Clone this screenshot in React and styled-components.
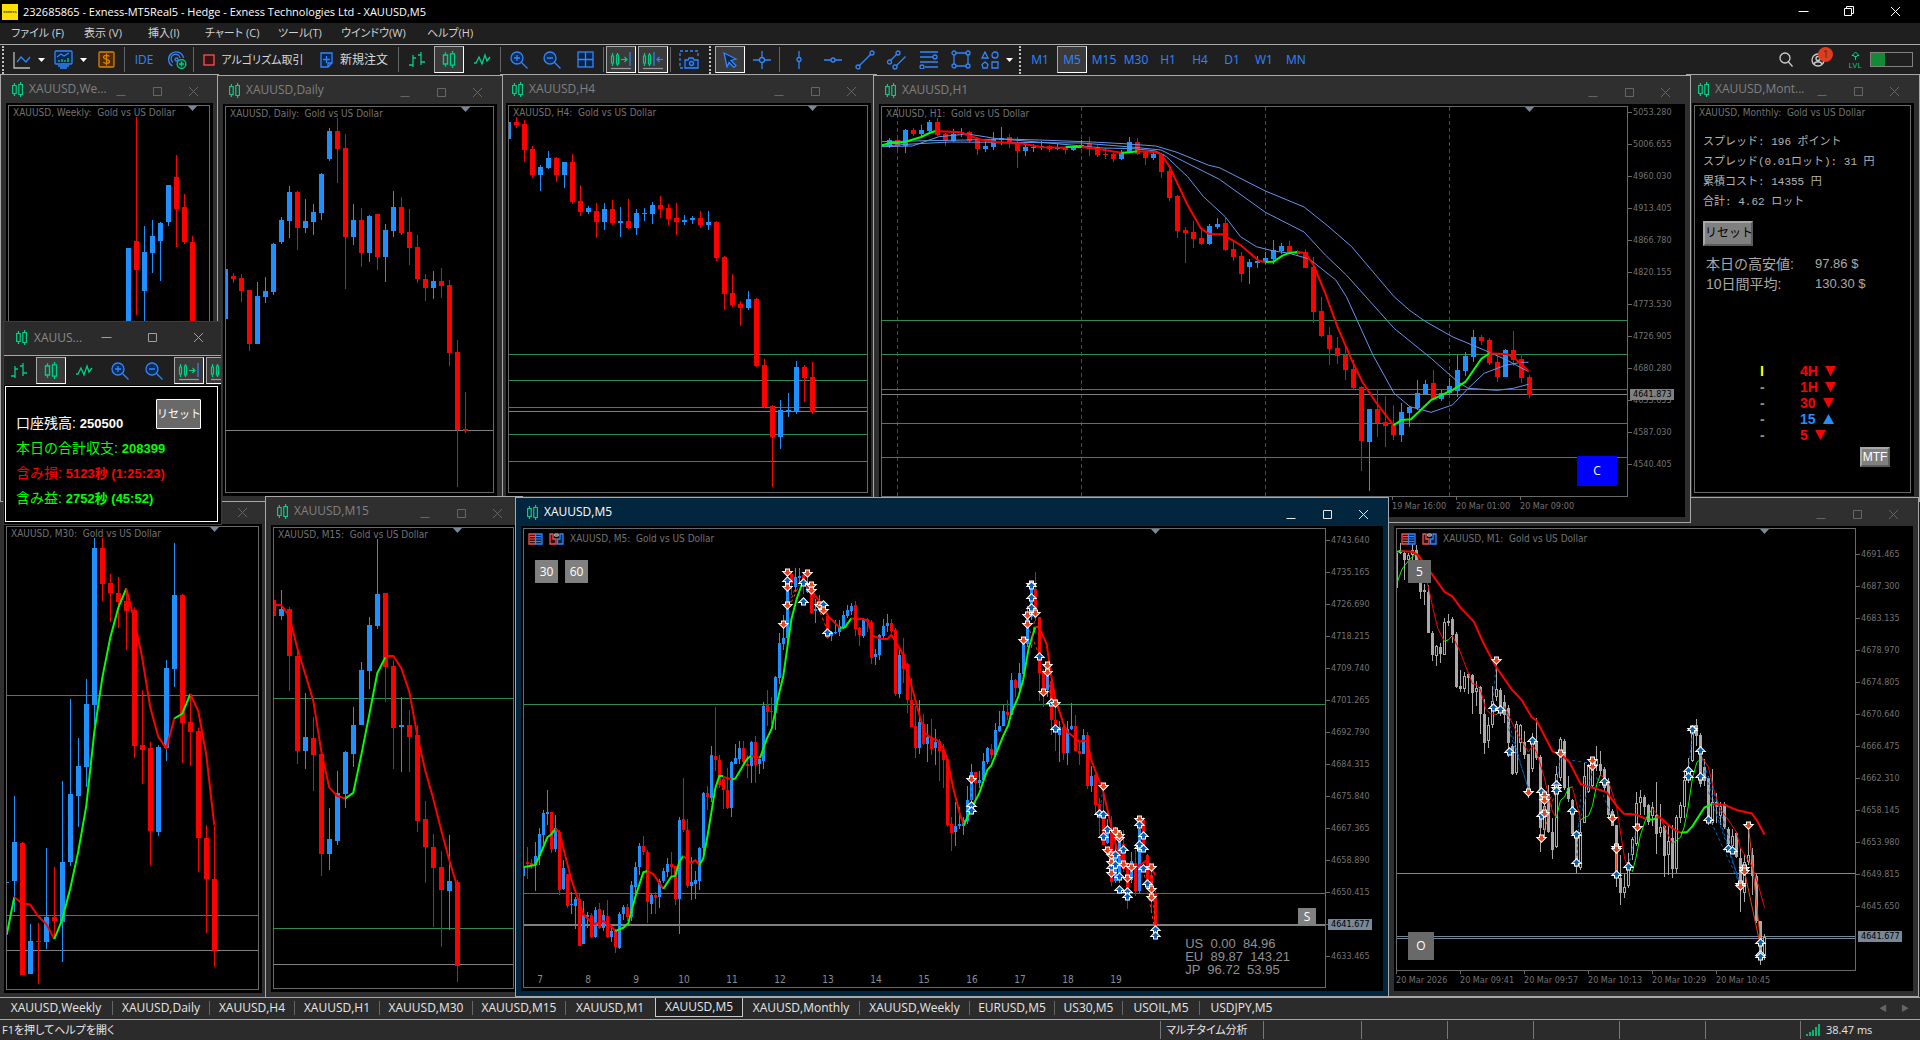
import React from 'react';
import styled, { createGlobalStyle, css } from 'styled-components';

const GlobalStyle = createGlobalStyle`
  * { box-sizing: border-box; }
  html, body { margin: 0; background: #000; }
  body { overflow: hidden; }
  button { font: inherit; color: inherit; padding: 0; margin: 0; background: none; border: 0; }
`;

const ui = '"Open Sans", "Noto Sans CJK JP", sans-serif';
const small = '"DejaVu Sans Condensed", "Open Sans", "Noto Sans CJK JP", sans-serif';
const arial = '"Liberation Sans", "Noto Sans CJK JP", sans-serif';
const gothic = '"Liberation Mono", "Noto Sans CJK JP", monospace';

const colors = {
  up: '#1e90ff',
  down: '#ff0000',
  lime: '#00ff00',
  level: '#2e8b57',
  price: '#808080',
  slate: '#778899',
  blue: '#6495ed',
  silver: '#a9a9a9'
};

/* ---------- chart data ----------
   bars: direction, high, body top, body bottom, low
   lines: "x,y x,y ..." in the same units, see origin and unit of each chart */

const weekly = {
  origin: [27, 18], unit: [3, 3], firstX: 119, step: 8,
  bars: `u 444 444 700 700,d 51 423 510 645,u 378 456 573 690,u 360 408 459 519,u 366 369 423 543,
    u 255 255 366 378,d 165 231 327 441,d 282 321 426 432,d 408 426 1000 1100`
};

const daily = {
  origin: [678, 21], unit: [3, 3], firstX: -1, step: 8,
  prices: [[991, colors.price]],
  bars: `u 507 507 657 657,d 519 528 537 549,d 522 534 573 606,d 570 570 732 753,u 546 588 732 732,
    u 531 573 591 609,u 429 432 576 585,u 351 360 426 432,u 258 276 363 414,d 273 276 384 450,
    u 297 363 384 399,u 312 336 366 405,u 219 222 339 360,u 84 93 177 183,d 54 93 147 249,
    d 102 144 411 567,u 312 360 411 435,d 324 360 459 501,u 345 348 459 486,d 342 342 471 510,
    u 372 390 471 546,u 273 321 393 411,d 291 321 399 405,d 327 396 444 495,d 405 441 537 549,
    d 522 537 564 603,u 513 543 564 597,d 504 543 558 594,d 540 555 759 798,d 720 756 991 1161,
    d 876 987 993 999`
};

const h4 = {
  origin: [27, 108], unit: [3, 3], firstX: -1, step: 8,
  prices: [853, 931, 1012, 1093, 1174].map(y => [y, colors.level]).concat([[1024, colors.price]]),
  bars: `u 156 156 207 207,d 141 156 165 174,d 150 162 240 276,d 228 237 315 324,u 285 291 315 363,
    u 243 264 294 297,d 261 264 315 336,u 276 276 315 354,d 252 276 396 402,d 345 393 426 438,
    u 408 414 426 432,d 399 423 456 504,u 399 417 456 480,d 390 417 459 465,u 411 453 459 501,
    d 387 453 474 477,u 417 429 474 495,u 414 429 432 453,u 396 405 432 462,d 378 405 417 444,
    d 402 414 447 465,d 399 444 456 495,u 435 450 456 465,u 438 444 450 462,d 423 444 465 474,
    u 423 456 465 480,d 453 456 564 573,d 558 561 672 720,d 612 669 705 711,d 693 702 714 768,
    u 663 687 714 720,d 684 687 888 891,d 867 885 1012 1014,d 1005 1008 1101 1251,
    u 990 1020 1101 1137,u 969 1020 1024 1041,u 873 891 1024 1032,d 885 891 924 996,d 876 921 1026 1032`
};

const h1 = {
  origin: [22.7, 111], unit: [1.889, 3], firstX: -1, step: 8,
  prices: [751, 853, 958, 1060, 1162].map(y => [y, colors.level]).concat([[973, colors.price]]),
  days: [15, 199, 383, 567],
  bars: `u 222 222 232 234,u 204 210 232 234,d 206 210 228 238,u 178 180 228 249,d 174 180 192 198,
    u 165 180 192 201,u 150 156 183 189,d 144 156 195 198,d 189 192 213 228,u 177 192 213 216,
    u 174 186 189 200,d 183 186 213 219,d 200 204 237 255,u 213 228 237 246,u 186 207 231 240,
    u 171 203 210 225,d 192 201 219 234,d 201 219 243 294,u 225 231 243 258,u 222 231 234 246,
    u 213 228 231 240,d 225 228 236 246,u 222 231 236 240,d 228 231 240 252,u 228 231 240 243,
    u 210 225 231 234,d 201 222 237 258,d 222 234 255 261,d 234 252 255 267,d 246 252 267 276,
    u 240 246 267 270,u 201 216 246 249,d 204 216 252 255,d 243 246 264 285,u 249 252 264 270,
    d 249 252 306 324,d 297 303 384 393,d 375 378 483 504,d 471 480 489 579,d 453 486 507 534,
    d 477 504 522 525,u 462 468 522 525,u 444 462 471 477,d 444 459 540 543,d 510 537 561 573,
    d 546 558 612 636,u 567 576 591 642,u 558 573 579 594,u 546 564 573 582,u 510 540 567 582,
    u 519 528 543 552,d 513 528 546 552,d 540 543 552 558,d 537 546 594 594,d 561 591 726 759,
    d 681 723 798 801,d 771 795 837 885,d 801 834 858 882,d 822 855 900 930,d 870 897 954 957,
    d 948 951 1113 1203,u 1017 1017 1116 1263,d 957 1017 1060 1101,d 978 1056 1068 1131,
    d 1005 1065 1095 1110,u 999 1026 1095 1116,u 1008 1011 1029 1071,u 930 969 1014 1020,
    u 930 942 972 975,d 900 939 987 990,u 960 969 987 993,u 924 948 969 975,u 855 900 963 981,
    u 846 858 903 918,u 780 801 861 876,d 795 801 813 825,d 804 810 879 885,d 858 876 921 936,
    u 837 840 921 921,d 783 840 870 888,d 852 867 924 939,d 915 921 975 984`,
  lines: [
    [colors.blue, 1, '22,215 80,213 180,210 250,207 320,210 420,216 480,221 540,228 580,247 640,286 660,293 747,363 820,411 865,468 910,530 950,605 990,680 1020,722 1050,755 1100,800 1160,840 1200,868 1244,905'],
    [colors.blue, 1, '22,228 80,222 150,216 250,217 400,219 500,232 550,240 590,272 660,328 747,427 820,486 860,555 900,615 990,775 1060,865 1110,935 1130,955 1185,961 1215,955 1244,943'],
    [colors.blue, 1, '22,230 80,228 130,200 185,192 240,206 310,215 380,225 440,234 500,236 540,243 560,260 600,320 630,380 671,440 700,500 730,530 762,543 790,549 830,567 880,630 900,680 920,750 950,855 990,970 1020,1010 1060,1027 1100,1005 1130,955 1160,910 1200,886 1230,877 1244,877'],
    [colors.lime, 2, '22,226 37,219 52,219 67,215 97,201 112,189 124,183'],
    [colors.down, 2, '124,183 170,187 190,198 210,209 240,217 290,221 325,232 370,233'],
    [colors.lime, 2, '370,231 400,231'],
    [colors.down, 2, '400,231 440,239 475,248'],
    [colors.lime, 2, '475,248 490,247 505,244'],
    [colors.down, 2, '505,244 537,246 550,252 566,290 600,405 625,475 641,492 665,493 700,525 735,573 747,576'],
    [colors.lime, 2, '747,576 762,575 780,556 792,549 807,546'],
    [colors.down, 2, '807,546 822,549 838,585 860,670 883,770 910,870 930,935 955,995 989,1066'],
    [colors.lime, 2, '989,1066 1004,1050 1022,1048 1060,990 1100,960 1125,935 1155,866 1170,850'],
    [colors.down, 2, '1170,850 1205,853 1220,868 1244,903']
  ]
};

const m30 = {
  origin: [21, 105], unit: [3, 2.851], firstX: -1, step: 8,
  prices: [[585, colors.level], [1210, colors.level], [1310, colors.price]],
  bars: `u 1116 1116 1118 1118,u 872 1004 1115 1203,d 1004 1006 1383 1383,u 1237 1286 1380 1380,
    d 1234 1286 1289 1408,u 1021 1217 1289 1309,d 1075 1217 1229 1275,u 830 1061 1232 1346,
    u 596 867 1061 1072,u 707 787 872 961,u 539 610 790 847,u 137 165 613 670,d 137 165 268 316,
    d 239 265 294 376,d 248 294 319 393,d 285 316 345 456,d 334 342 730 764,d 570 727 741 838,
    d 718 736 972 1069,u 727 733 975 986,u 485 507 736 773,u 151 299 510 562,d 296 299 664 778,
    d 585 661 690 787,d 678 687 992 1089,d 955 992 1109 1263,d 958 1109 1314 1360`,
  lines: [
    [colors.lime, 2, '20,1268 43,1160'],
    [colors.down, 2, '43,1160 65,1178 90,1181 115,1215 139,1237 163,1280'],
    [colors.lime, 2, '163,1280 187,1223 211,1135 235,1030 259,900 283,690 307,535 331,420 355,335 379,280'],
    [colors.down, 2, '379,280 403,370 427,480 451,620 475,703 499,736 523,651'],
    [colors.lime, 2, '523,651 547,637 571,581'],
    [colors.down, 2, '571,581 595,630 619,755 643,955']
  ]
};

const m15 = {
  origin: [822, 108], unit: [3, 2.851], firstX: -1, step: 8,
  prices: [[594, colors.level], [1247, colors.level], [1352, colors.price]],
  bars: `d 314 314 360 360,u 285 339 359 371,d 334 339 473 573,d 450 473 744 781,u 579 704 744 795,
    d 647 707 755 858,d 740 753 1038 1100,u 907 995 1038 1083,u 801 864 1001 1012,u 744 747 867 907,
    u 619 670 753 790,u 490 513 670 670,u 362 385 516 567,u 140 296 388 396,d 293 293 505 604,
    d 485 502 679 795,u 590 670 676 804,d 627 670 704 804,d 670 698 944 975,d 887 938 1018 1120,
    d 981 1018 1078 1246,d 1029 1075 1140 1303,u 984 1115 1143 1254,d 1112 1118 1357 1403`,
  lines: [
    [colors.down, 2, '822,327 844,328 868,360 892,450 916,525 940,600 964,745 988,848 1012,872 1036,879'],
    [colors.lime, 2, '1036,879 1060,863 1084,755 1108,640 1132,522 1156,477'],
    [colors.down, 2, '1156,473 1180,473 1204,508 1228,575 1252,700 1276,800 1300,880 1324,970 1348,1055 1368,1118']
  ]
};

const m5 = {
  origin: [27, 111], unit: [3, 2.851], firstX: -1, step: 4,
  prices: [[611, colors.level], [1150, colors.level], [1236, colors.price], [1239, colors.price]],
  bars: `u 1060 1075 1100 1100,d 1018 1060 1066 1109,d 1051 1063 1072 1080,u 1004 1043 1069 1143,
    u 964 981 1043 1069,u 912 921 984 1010,u 855 918 924 955,d 918 918 1023 1035,u 927 964 1023 1032,
    d 969 975 1140 1155,u 1055 1078 1138 1140,d 1095 1095 1186 1192,u 1146 1180 1183 1209,
    u 1160 1166 1186 1252,d 1152 1166 1300 1300,u 1172 1212 1294 1294,u 1203 1212 1217 1249,
    d 1206 1212 1274 1277,u 1189 1197 1274 1277,d 1177 1195 1249 1252,u 1197 1212 1249 1257,
    d 1169 1214 1274 1277,u 1246 1257 1274 1289,d 1252 1257 1303 1320,u 1203 1209 1306 1309,
    u 1183 1189 1209 1226,d 1180 1189 1217 1230,u 1115 1126 1217 1229,u 1061 1075 1132 1160,
    u 1006 1015 1075 1098,d 986 1015 1032 1041,d 1026 1032 1175 1235,u 1149 1155 1180 1209,
    d 1146 1155 1163 1209,u 1109 1115 1160 1192,u 1078 1086 1115 1120,u 1049 1066 1089 1103,
    d 1032 1066 1075 1103,d 1072 1072 1166 1183,u 932 941 1166 1266,d 821 938 969 975,
    d 938 969 1130 1135,u 1046 1118 1130 1169,u 1086 1112 1123 1166,u 1018 1021 1115 1140,
    u 861 864 1021 1041,d 844 864 875 912,u 730 755 878 889,d 619 758 770 801,d 755 770 841 850,
    d 821 824 855 909,d 793 855 907 909,u 773 776 907 932,u 724 764 781 781,u 716 736 767 781,
    d 716 736 776 787,d 755 781 787 821,u 716 718 787 835,d 701 718 784 835,u 758 767 781 810,
    u 605 616 773 795,d 570 613 633 673,d 590 630 633 667,u 530 533 636 684,u 408 436 536 553,
    u 356 422 439 456,u 262 280 422 436,d 230 240 265 300,u 222 248 275 291,u 222 245 250 262,
    d 240 242 270 296,u 250 265 290 294,d 270 288 350 353,u 310 339 345 379,u 300 325 336 348,
    d 325 330 345 352,d 355 359 422 425,u 402 405 416 430,u 371 404 408 411,u 371 388 405 416,
    u 345 356 391 396,u 328 342 359 365,u 322 331 345 356,d 316 328 396 416,d 390 393 413 445,
    u 365 368 416 422,d 365 368 376 404,d 371 376 479 495,u 453 467 476 499,u 410 413 470 485,
    u 368 388 416 425,u 354 379 388 404,d 368 379 402 408,d 393 399 582 587,u 456 470 582 593,
    d 422 467 510 550,d 493 496 599 636,d 536 599 676 676,d 616 673 735 764,u 599 661 736 753,
    d 639 667 724 727,u 667 704 724 775,d 653 704 738 755,u 681 718 736 784,d 710 716 744 830,
    d 724 741 770 850,d 764 767 955 961,d 932 952 978 1029,u 890 958 975 1015,u 904 952 958 966,
    u 932 941 958 984,u 844 884 944 952,u 781 804 884 912,d 804 804 835 895,u 801 827 835 850,
    u 750 773 827 830,u 733 736 775 781,d 724 738 755 767,u 664 684 755 761,u 630 673 687 690,
    u 613 630 673 673,d 599 633 641 656,u 522 542 641 641,d 539 542 564 590,u 493 522 564 570,
    u 420 433 525 525,u 331 362 439 447,u 262 280 362 370,d 234 282 350 373,d 362 362 522 602,
    d 510 516 570 619,u 500 530 570 590,d 530 545 656 699,d 590 656 684 744,u 659 676 698 775,
    d 667 676 750 770,u 659 681 750 784,u 607 673 682 685,d 641 673 744 744,d 721 744 753 784,
    u 681 698 753 753,d 690 698 844 852,u 787 815 844 861,d 810 813 898 924,d 878 895 915 984,
    d 870 915 1012 1012,u 938 969 1007 1010,d 929 975 1118 1129,u 960 1040 1115 1120,
    u 981 1003 1112 1120,d 969 1010 1080 1090,d 1060 1075 1150 1195,u 1032 1058 1112 1120,
    d 1026 1063 1143 1157,u 932 965 1143 1149,d 932 940 1020 1030,d 1038 1040 1130 1140,
    d 1080 1098 1160 1206,d 1143 1150 1240 1280`,
  lines: [
    [colors.lime, 2, '27,1075 61,1069 80,1029 97,990 109,981 121,966'],
    [colors.down, 2, '121,966 133,975 145,1020 169,1110 193,1177 205,1209 235,1238 265,1229 285,1240 301,1257'],
    [colors.lime, 2, '301,1257 325,1248 340,1235 361,1160 385,1090 397,1086'],
    [colors.down, 2, '397,1086 415,1095 445,1137'],
    [colors.lime, 2, '445,1137 469,1102 481,1100 493,1060 505,1043'],
    [colors.down, 2, '505,1043 529,1063 541,1055 553,1069'],
    [colors.lime, 2, '553,1069 565,1050 577,990 601,850 613,815 625,815'],
    [colors.down, 2, '625,818 650,825'],
    [colors.lime, 2, '650,825 661,823 697,765 709,758'],
    [colors.down, 2, '709,758 735,764'],
    [colors.lime, 2, '735,764 755,710 770,680 790,590 805,530 817,450 829,370 845,310 862,265'],
    [colors.down, 2, '862,265 889,285 915,320 940,360 975,393'],
    [colors.lime, 2, '975,393 990,391 1009,366'],
    [colors.down, 2, '1009,366 1045,368 1057,373 1075,416 1100,425 1117,425 1129,413 1141,430 1165,470 1189,556 1213,640 1230,693 1249,707 1265,712 1285,735 1297,767 1315,850 1335,925 1347,955'],
    [colors.lime, 2, '1347,955 1365,915 1393,864 1417,798 1429,785 1465,700 1480,670 1489,636 1510,590 1525,540 1541,450 1561,390'],
    [colors.down, 2, '1561,390 1573,390 1595,440 1609,530 1621,595 1645,665 1657,690 1681,707 1693,718 1705,714 1717,718 1729,770 1765,860 1789,960 1805,1020 1825,1060 1861,1078 1895,1056 1921,1098']
  ],
  links: [
    ['s', '817,340 841,280', 1], ['s', '829,320 853,270', 1], ['s', '889,285 937,400', 1],
    ['s', '1537,385 1573,470', 1], ['s', '1549,450 1561,350', 1], ['s', '1597,520 1609,600', 1],
    ['b', '1765,850 1753,920', 1], ['s', '1909,1080 1921,1250', 1], ['b', '1369,900 1369,830', 1],
    ['s', '1885,1080 1921,1260', 1]
  ],
  trades: `s 817 233,b 817 258,s 817 275,s 817 327,s 805 381,b 865 265,b 865 320,s 877 236,s 889 272,
    s 889 284,s 913 328,b 925 327,s 925 343,b 937 408,s 1369 825,b 1369 902,b 1369 916,s 1525 427,
    s 1537 355,s 1537 381,b 1549 335,b 1549 309,s 1549 269,b 1549 273,s 1561 350,b 1573 477,
    s 1597 500,s 1597 520,s 1585 576,b 1609 606,s 1621 606,b 1621 682,s 1765 843,b 1753 923,
    b 1765 927,b 1765 988,b 1777 970,s 1801 972,s 1813 992,s 1813 982,s 1777 1027,b 1825 1027,
    s 1789 1040,b 1801 1040,b 1789 1078,s 1789 1060,b 1801 1069,s 1789 1092,s 1825 1065,b 1813 1104,
    b 1813 1140,s 1837 1107,b 1837 1146,b 1837 1160,s 1849 1076,s 1873 939,b 1873 956,b 1873 1020,
    b 1873 1012,b 1885 985,b 1885 1022,b 1885 1080,s 1909 1074,b 1897 1124,s 1909 1138,s 1909 1160,
    b 1921 1254,b 1921 1270`
};

const m1 = {
  origin: [35, 111], unit: [2.931, 2.851], firstX: -1, step: 4, mono: true,
  prices: [[1093, '#3cb371'], [1270, colors.slate], [1276, colors.slate]],
  bars: `d 175 180 280 285,u 150 170 180 182,d 175 178 200 255,u 180 185 200 200,u 155 170 185 215,
    d 157 170 230 240,d 240 245 290 311,u 268 285 290 328,d 270 290 407 407,d 402 407 470 487,
    u 442 445 472 502,d 436 447 468 493,u 365 375 469 469,u 354 374 378 388,d 362 368 413 436,
    d 405 410 562 564,d 513 558 566 576,u 519 530 568 576,d 521 525 535 582,d 523 527 578 639,
    u 545 565 575 615,d 560 562 639 696,d 596 639 720 753,u 647 671 716 736,u 560 600 671 679,
    u 490 568 590 600,d 565 570 630 644,d 585 605 640 665,d 612 622 720 760,d 725 730 809 812,
    u 659 668 806 812,u 668 670 720 747,d 687 718 755 766,d 753 753 855 878,u 693 710 795 804,
    d 650 715 765 770,d 755 762 963 1032,u 880 900 970 998,d 840 870 975 977,d 935 975 1025 1052,
    u 787 810 1018 1021,u 704 710 820 830,d 710 716 850 855,d 815 850 880 890,d 880 885 980 986,
    d 980 985 1075 1092,u 940 975 1078 1083,u 779 815 948 950,u 780 784 860 865,u 765 775 845 850,
    u 730 770 785 800,d 744 782 800 815,d 790 795 850 860,d 820 830 925 935,d 910 915 957 957,
    d 955 955 1100 1132,d 1040 1105 1150 1183,u 1095 1133 1150 1162,u 1035 1060 1130 1135,
    u 990 995 1040 1055,u 861 892 1010 1015,u 856 876 893 925,d 870 876 903 925,d 895 898 945 955,
    u 890 905 930 957,d 832 925 980 1038,u 895 962 978 990,d 955 957 1043 1102,u 955 1000 1040 1098,
    d 955 992 1080 1106,u 925 933 1080 1092,u 890 898 935 950,u 800 826 905 935,u 765 790 820 835,
    u 675 695 773 775,d 653 670 700 730,d 693 698 838 846,d 767 790 830 843,d 815 820 950 955,
    u 795 890 950 955,d 865 890 905 950,u 890 900 930 955,d 890 895 962 965,d 962 965 1010 1012,
    u 965 985 1015 1025,d 975 978 1045 1050,d 1020 1050 1140 1203,u 1040 1060 1150 1175,
    u 955 1040 1060 1070,d 1021 1040 1100 1155,d 1095 1100 1230 1235,d 1228 1230 1340 1355,
    u 1266 1275 1325 1340`,
  lines: [
    [colors.lime, 1, '36,262 50,225 70,200 92,180'],
    [colors.down, 1, '92,180 127,275 140,335 155,395 174,431'],
    [colors.lime, 1, '174,431 186,427 197,415'],
    [colors.down, 1, '197,415 220,460 256,552 268,555 280,570 295,625 310,638 326,640'],
    [colors.lime, 1, '326,640 350,617'],
    [colors.down, 1, '350,617 373,665 397,710 420,747 434,728 445,750 467,820 490,915 502,935'],
    [colors.lime, 1, '502,935 514,885 526,875 537,850 549,846'],
    [colors.down, 1, '549,846 573,940'],
    [colors.lime, 1, '573,940 597,928 608,900 620,840 631,812'],
    [colors.down, 1, '631,812 655,830 678,900 690,975 702,1050 713,1075 725,1088'],
    [colors.lime, 1, '725,1088 735,1050 748,985 765,935 784,908'],
    [colors.down, 1, '784,908 807,935 842,1008'],
    [colors.lime, 1, '842,1008 866,990 877,960 889,900 901,820 914,776 930,763'],
    [colors.down, 1, '930,763 948,790 965,860 983,910 1006,940 1030,975 1041,1020 1077,1075 1095,1130 1112,1190'],
    [colors.lime, 2, '35,176 46,174'],
    [colors.down, 2, '46,174 80,176 97,186 112,205 139,242 174,290 197,303 221,335 260,375 290,440 326,505 373,570 400,598 430,648 444,657 491,745 514,752 540,775 573,838 596,846 620,852 650,862 678,900 700,923 735,925 766,938'],
    [colors.lime, 2, '766,938 784,940 795,935'],
    [colors.down, 2, '795,932 807,934 842,965 866,977'],
    [colors.lime, 2, '866,977 885,975 901,958 936,905 959,895'],
    [colors.down, 2, '959,895 994,897 1030,912 1075,922 1090,942 1112,982']
  ],
  links: [
    ['b', '315,620 326,490', 1], ['b', '350,620 420,855', 1], ['b', '362,680 420,850', 1],
    ['b', '502,845 514,760', 1], ['b', '514,765 608,780', 1], ['b', '561,1060 573,870', 1],
    ['b', '561,980 608,800', 1], ['b', '620,820 666,936', 1], ['b', '713,1075 737,965', 1],
    ['b', '889,800 901,690', 1], ['b', '924,750 1018,1020', 1], ['b', '948,930 1041,1125', 1],
    ['b', '936,800 1041,1125', 1], ['b', '948,860 1041,1120', 1], ['b', '1006,1025 1041,1125', 1],
    ['s', '467,970 502,850', 1], ['s', '456,925 502,850', 1], ['s', '678,1020 678,1095', 0],
    ['s', '1065,955 1100,1285', 0], ['s', '1053,1085 1098,1290', 0]
  ],
  trades: `s 326 484,b 315 620,b 338 628,b 362 748,b 432 714,s 420 860,b 456 862,s 467 870,s 467 883,
    b 456 929,s 467 921,s 456 992,b 502 842,s 502 848,b 502 857,s 514 750,b 549 916,b 561 984,
    b 561 1062,s 608 786,s 608 770,b 643 833,s 666 936,s 678 1018,s 678 1022,b 678 1098,b 713 1075,
    s 737 962,b 889 800,b 889 819,s 901 680,b 901 685,b 924 745,b 924 819,b 948 940,b 1006 1022,
    b 1018 1030,s 1041 1122,s 1041 1129,s 1053 1078,s 1053 1086,s 1065 955,b 1100 1290,b 1100 1326,
    b 1100 1331`
};

/* ---------- icons ---------- */

const Svg = ({ w = 20, h = 20, children, ...rest }) => (
  <svg width={w} height={h} viewBox={`0 0 ${w} ${h}`} fill="none" stroke="#2f86ff" strokeWidth="1.3" aria-hidden="true" {...rest}>
    {children}
  </svg>
);

const CandleIcon = ({ w = 11, h = 15 }) => (
  <svg width={w} height={h} viewBox="0 0 11 15" fill="none" stroke="#00d084" strokeWidth="1.2" aria-hidden="true">
    <path d="M.6 3.5h3.6v8H.6zM2.4 1v2.5M2.4 11.5V14M6.8 2.5h3.6v10H6.8zM8.6 0v2.5M8.6 12.5V15" />
  </svg>
);

const BarsIcon = () => (
  <Svg w={18} h={18} stroke="#00d084"><path d="M5 4v12M1 14h4M5 7h3M13 1v13M10 4h3M13 11h4" /></Svg>
);
const WaveIcon = () => (
  <Svg w={18} h={14} stroke="#00d084"><path d="M1 10h2l3-6 3 7 3-9 2 6 3-4" /></Svg>
);
const ZoomIcon = ({ plus }) => (
  <Svg w={18} h={18}>
    <circle cx="7" cy="7" r="6" fill="#0b2c55" /><path d="M11.5 11.5l6 6M4 7h6" />
    {plus && <path d="M7 4v6" />}
  </Svg>
);
const ScrollIcon = () => (
  <Svg w={22} h={20} stroke="#00d084" strokeWidth="1.2">
    <path d="M1.5 6h2v7h-2zM2.5 3v3M2.5 13v3M6.5 5h2v9h-2zM7.5 3v2M7.5 14v2M11 9.5h6M14.5 7l2.5 2.5-2.5 2.5" />
    <path d="M20 2v14" stroke="#2f86ff" /><path d="M1 18.5h20" stroke="#999" />
  </Svg>
);
const ShiftIcon = () => (
  <Svg w={22} h={20} stroke="#00d084" strokeWidth="1.2">
    <path d="M1.5 6h2v7h-2zM2.5 3v3M2.5 13v3M6.5 5h2v9h-2zM7.5 3v2M7.5 14v2" />
    <path d="M12 2v14M21 9.5h-6M17.5 7L15 9.5l2.5 2.5" stroke="#2f86ff" /><path d="M1 18.5h20" stroke="#999" />
  </Svg>
);
const BookIcon = () => (
  <Svg w={15} h={12}>
    <path d="M7.5 1H1v10h6.5" stroke="#f05050" fill="#3a1010" /><path d="M7.5 1H14v10H7.5z" fill="#08244a" />
    <path d="M2 3.5h5M2 6h5M2 8.5h5" stroke="#f05050" strokeWidth="1" /><path d="M8 3.5h5M8 6h5M8 8.5h5" strokeWidth="1" />
  </Svg>
);
const TradeIcon = () => (
  <Svg w={15} h={12}>
    <path d="M4 1H1v10h6V6H4z" stroke="#f05050" fill="#3a1010" /><path d="M11 1h3v10H8.5V6H11z" fill="#08244a" />
    <rect x="5.5" y="1" width="4" height="2" rx="1" stroke="#aaa" />
  </Svg>
);
const SignalIcon = () => (
  <Svg w={14} h={12} stroke="#12b070" strokeWidth="2"><path d="M1 12v-2M4 12V8M7 12V6M10 12V3M13 12V0" /></Svg>
);

/* ---------- chart ---------- */

const Plot = styled.svg`
  display: block;
  width: 100%;
  height: 100%;
`;

const parse = text => text.split(',').map(row => {
  const [kind, ...values] = row.trim().split(' ');
  return [kind, ...values.map(Number)];
});

function Candles({ chart }) {
  const { origin, unit, firstX, step } = chart;
  const y = v => Math.round((v - origin[1]) / unit[1]);
  const at = (px, py) => [(px - origin[0]) / unit[0], (py - origin[1]) / unit[1]];
  const path = points => points.split(' ').map(p => at(...p.split(',').map(Number)).map(n => n.toFixed(1)).join(',')).join(' ');
  const half = step === 8 ? 2 : 1;
  const bars = parse(chart.bars);
  const lastX = firstX + (bars.length - 1) * step;

  return (
    <Plot>
      {(chart.days || []).map(x => (
        <line key={x} x1={x + 0.5} x2={x + 0.5} y1="0" y2="100%" stroke="#4a4a4a" strokeDasharray="4 3" />
      ))}
      {(chart.prices || []).map(([v, color]) => (
        <rect key={v} x="0" y={y(v)} width="100%" height="1" fill={color} />
      ))}
      {bars.map(([kind, high, top, bottom, low], i) => {
        const x = firstX + i * step;
        const color = chart.mono ? colors.silver : kind === 'u' ? colors.up : colors.down;
        const height = Math.max(1, y(bottom) - y(top));
        return (
          <g key={i} fill={color}>
            <rect x={x} y={y(high)} width="1" height={Math.max(1, y(low) - y(high))} />
            <rect x={x - half} y={y(top)} width={half * 2 + 1} height={height} />
            {chart.mono && kind === 'u' && height > 2 && (
              <rect x={x} y={y(top) + 1} width="1" height={height - 2} fill="#000" />
            )}
          </g>
        );
      })}
      {(chart.lines || []).map(([color, width, points], i) => (
        <polyline key={i} points={path(points)} fill="none" stroke={color} strokeWidth={width} />
      ))}
      {(chart.links || []).map(([kind, points, dashed], i) => (
        <polyline
          key={i}
          points={path(points)}
          stroke={kind === 'b' ? '#0860b0' : '#e04520'}
          strokeDasharray={dashed ? '3 3' : undefined}
        />
      ))}
      {chart.trades && parse(chart.trades).map(([kind, px, py], i) => {
        const [cx, cy] = at(px, py).map(Math.round);
        return (
          <path
            key={i}
            transform={`translate(${cx + 0.5} ${cy}) ${kind === 's' ? 'scale(1 -1)' : ''}`}
            d="M0-3.5L3.5 0H1.5v2.5h-3V0h-2z"
            fill={kind === 'b' ? '#0860b0' : '#e04520'}
            stroke="#fff"
            strokeWidth="2"
            paintOrder="stroke"
          />
        );
      })}
      <path d={`M${lastX - 4} 0h9l-4.5 5z`} fill={colors.slate} />
    </Plot>
  );
}

const ChartArea = styled.div`
  flex: 1;
  min-height: 0;
  display: grid;
  grid-template-columns: minmax(0, 1fr) ${p => (p.$priceAxis ? '57px' : '3px')};
  grid-template-rows: minmax(0, 1fr) ${p => (p.$timeAxis ? '20px' : '3px')};
  padding: 2px 0 0 2px;
  background: #000;
`;

const Frame = styled.div`
  position: relative;
  min-width: 0;
  border: 1px solid #696969;
  overflow: hidden;
`;

const ChartLabel = styled.div`
  position: absolute;
  top: 0;
  left: 4px;
  display: flex;
  align-items: center;
  gap: 6px;
  color: #727272;
  font: 10px/13px ${small};
  white-space: pre;
  padding-top: ${p => (p.$icons ? '3px' : '0')};
`;

const PriceAxis = styled.div`
  position: relative;
  padding-top: ${p => Math.max(p.$start, 0)}px;
  margin-top: ${p => Math.min(p.$start, 0)}px;
  font: 9px/32px ${small};
  color: #727272;
`;

const PriceMark = styled.div`
  display: flex;
  align-items: center;
  height: 32px;
  &::before {
    content: '';
    width: 4px;
    height: 1px;
    margin-right: 1px;
    background: #696969;
  }
`;

const PriceTag = styled.div`
  position: absolute;
  top: ${p => p.$top}px;
  left: 2px;
  width: 44px;
  padding-left: 3px;
  background: ${p => p.$color};
  color: #000;
  font: 9px/11px ${small};
`;

const TimeAxis = styled.div`
  display: flex;
  padding-left: ${p => p.$start}px;
  color: #727272;
  font: 9px/16px ${small};
  white-space: nowrap;
`;

const TimeMark = styled.span`
  flex: 0 0 64px;
  &::before {
    content: '';
    display: block;
    width: 1px;
    height: 3px;
    margin-bottom: -2px;
    background: #696969;
  }
`;

const Chart = ({ name, chart, axis, times, icons, children }) => (
  <ChartArea $priceAxis={!!axis} $timeAxis={!!times}>
    <Frame>
      {chart && <Candles chart={chart} />}
      <ChartLabel $icons={icons}>
        {icons && <BookIcon />}
        {icons && <TradeIcon />}
        {`XAUUSD, ${name}:  Gold vs US Dollar`}
      </ChartLabel>
      {children}
    </Frame>
    {axis ? (
      <PriceAxis $start={axis.start}>
        {axis.marks.map(m => <PriceMark key={m}>{m}</PriceMark>)}
        <PriceTag $top={axis.tagTop} $color={axis.tagColor}>{axis.tag}</PriceTag>
      </PriceAxis>
    ) : <span />}
    {times && (
      <TimeAxis $start={times.start}>
        {times.marks.map(t => <TimeMark key={t}>{t}</TimeMark>)}
      </TimeAxis>
    )}
  </ChartArea>
);

/* ---------- windows ---------- */

const WindowBox = styled.section`
  position: absolute;
  left: ${p => p.$x}px;
  top: ${p => p.$y}px;
  width: ${p => p.$w}px;
  height: ${p => p.$h}px;
  display: flex;
  flex-direction: column;
  padding: 0 5px 5px;
  border: 1px solid #a8a8a8;
  background: ${p => (p.$active ? '#03263f' : '#2f2f2f')};
`;

const WindowHeader = styled.header`
  flex: 0 0 28px;
  display: flex;
  align-items: center;
  gap: 6px;
  padding: 0 2px 0 6px;
  color: ${p => (p.$active ? '#fff' : '#808080')};
  font: 12px/16px ${ui};
`;

const WindowTitle = styled.h2`
  flex: 1;
  min-width: 0;
  margin: 0;
  font: inherit;
  white-space: nowrap;
`;

const Controls = styled.div`
  display: flex;
  flex: none;
  color: ${p => p.$color};
  padding-top: ${p => p.$drop || 0}px;
`;

const Control = styled.button`
  width: ${p => p.$w}px;
  height: 20px;
  display: grid;
  place-items: center;
`;

const controlShapes = {
  Minimize: 'M.5 9.5h9',
  Maximize: 'M1.5 1.5h8v8h-8z',
  Restore: 'M.5 2.5h7v7h-7zM2.5 2.5v-2h7v7h-2',
  Close: 'M1 1l9 9M10 1l-9 9',
  Dash: 'M.5 5.5h10'
};

const WindowControls = ({ names = ['Minimize', 'Maximize', 'Close'], color, w = 36, drop }) => (
  <Controls $color={color} $drop={drop}>
    {names.map(name => (
      <Control key={name} $w={w} aria-label={name === 'Dash' ? 'Minimize' : name}>
        <svg width="11" height="11" fill="none" stroke="currentColor" aria-hidden="true"><path d={controlShapes[name]} /></svg>
      </Control>
    ))}
  </Controls>
);

const ChartWindow = ({ box: [x, y, w, h], title, active, children }) => (
  <WindowBox $x={x} $y={y} $w={w} $h={h} $active={active}>
    <WindowHeader $active={active}>
      <CandleIcon />
      <WindowTitle>{title}</WindowTitle>
      <WindowControls color={active ? '#e8e8e8' : '#666'} drop={4} />
    </WindowHeader>
    {children}
  </WindowBox>
);

/* ---------- overlays drawn by the indicators ---------- */

const Overlay = styled.div`
  position: absolute;
  ${p => p.$place};
`;

const PanelButton = styled.button`
  width: ${p => p.$w}px;
  height: ${p => p.$h}px;
  background: ${p => p.$bg || '#808080'};
  color: ${p => p.$fg || '#fff'};
  font: ${p => p.$size || 12}px/1 ${p => p.$font || ui};
  white-space: nowrap;
  ${p => p.$bevel && css`
    border: 2px solid;
    border-color: #a8a8a8 #5c5c5c #5c5c5c #a8a8a8;
  `}
  ${p => p.$outline && css`border: 1px solid #fff; border-radius: 1px;`}
`;

const ButtonRow = styled.div`
  display: flex;
  gap: 7px;
`;

const Hours = styled.div`
  display: flex;
  color: #8c8c8c;
  font: 10px/14px ${small};
  span { width: 48px; text-align: center; }
`;

const Sessions = styled.div`
  color: #909090;
  font: 13px/13px ${arial};
  white-space: pre;
`;

const Costs = styled.div`
  display: flex;
  flex-direction: column;
  align-items: flex-start;
  color: #b4b4b4;
  font: 11px/20px ${gothic};
  white-space: nowrap;
  button { margin-top: 9px; }
`;

const Ranges = styled.dl`
  display: grid;
  grid-template-columns: 109px auto;
  margin: 8px 0 0 3px;
  color: #a9a9a9;
  font: 13px/20px ${arial};
  dt { font-size: 14px; }
  dd { margin: 0; }
`;

const Signals = styled.div`
  display: grid;
  grid-template-columns: 40px auto;
  font: bold 14px/16px ${arial};
  white-space: nowrap;
`;

const Mark = styled.span`
  color: ${p => p.$color};
`;

const Trend = styled.span`
  display: flex;
  align-items: center;
  gap: 7px;
  color: ${p => (p.$up ? colors.up : colors.down)};
`;

const signals = [['I', '4H'], ['-', '1H'], ['-', '30'], ['-', '15', true], ['-', '5']];

const MonthlyPanel = () => (
  <>
    <Overlay $place="top: 26px; left: 8px;">
      <Costs>
        <span>スプレッド: 196 ポイント</span>
        <span>スプレッド(0.01ロット): 31 円</span>
        <span>累積コスト: 14355 円</span>
        <span>合計: 4.62 ロット</span>
        <PanelButton $w={50} $h={25} $bevel $fg="#000" $font={gothic}>リセット</PanelButton>
      </Costs>
      <Ranges>
        <dt>本日の高安値:</dt><dd>97.86 $</dd>
        <dt>10日間平均:</dt><dd>130.30 $</dd>
      </Ranges>
    </Overlay>
    <Overlay $place="top: 257px; left: 65px;">
      <Signals>
        {signals.map(([mark, name, up]) => (
          <React.Fragment key={name}>
            <Mark $color={mark === 'I' ? '#ff0' : '#909090'}>{mark}</Mark>
            <Trend $up={up}>
              {name}
              <svg width="11" height="10" fill="currentColor" aria-hidden="true"><path d={up ? 'M0 10h11L5.5 0z' : 'M0 0h11L5.5 10z'} /></svg>
            </Trend>
          </React.Fragment>
        ))}
      </Signals>
    </Overlay>
    <Overlay $place="right: 20px; bottom: 25px;">
      <PanelButton $w={30} $h={20} $bevel $font={arial}>MTF</PanelButton>
    </Overlay>
  </>
);

/* ---------- account window ---------- */

const FloatBox = styled.section`
  position: absolute;
  left: 3px;
  top: 247px;
  width: 219px;
  height: 204px;
  display: flex;
  flex-direction: column;
  border: 1px solid #3c3c3c;
  background: #000;
  overflow: hidden;
`;

const FloatHeader = styled.header`
  flex: 0 0 33px;
  display: flex;
  align-items: center;
  gap: 7px;
  padding: 0 0 2px 12px;
  background: #2b2b2b;
  color: #8a8a8a;
  font: 12px/16px ${ui};
`;

const FloatTools = styled.div`
  flex: 0 0 30px;
  display: flex;
  align-items: center;
  gap: 2px;
  border-top: 1px solid #a8a8a8;
  background: #1f1f1f;
`;

const Account = styled.div`
  position: relative;
  flex: 1;
  display: flex;
  flex-direction: column;
  margin: 1px 3px 2px 1px;
  padding: 24px 0 0 10px;
  border: 1px solid #fff;
`;

const AccountRow = styled.p`
  margin: 0;
  color: ${p => p.$color};
  font: 14px/25px ${arial};
  white-space: nowrap;
  strong { font-size: 13px; }
`;

const AccountWindow = () => (
  <FloatBox>
    <FloatHeader>
      <CandleIcon />
      <WindowTitle>XAUUS...</WindowTitle>
      <WindowControls names={['Dash', 'Maximize', 'Close']} color="#a0a0a0" w={46} />
    </FloatHeader>
    <FloatTools>
      <Tool aria-label="Bars"><BarsIcon /></Tool>
      <Tool $on aria-label="Candles"><CandleIcon w={14} h={17} /></Tool>
      <Tool $w={32} aria-label="Line"><WaveIcon /></Tool>
      <Divider />
      <Tool $w={32} aria-label="Zoom in"><ZoomIcon plus /></Tool>
      <Tool $w={32} aria-label="Zoom out"><ZoomIcon /></Tool>
      <Divider />
      <Tool $on aria-label="Auto scroll"><ScrollIcon /></Tool>
      <Tool $on aria-label="Chart shift"><ShiftIcon /></Tool>
    </FloatTools>
    <Account>
      <AccountRow $color="#fff">口座残高: <strong>250500</strong></AccountRow>
      <AccountRow $color="#00ff00">本日の合計収支: <strong>208399</strong></AccountRow>
      <AccountRow $color="#ff0000">含み損: <strong>5123秒 (1:25:23)</strong></AccountRow>
      <AccountRow $color="#00ff00">含み益: <strong>2752秒 (45:52)</strong></AccountRow>
      <Overlay $place="top: 12px; right: 16px;">
        <PanelButton $w={45} $h={30} $bg="#696969" $outline $size={11} $font={arial}>リセット</PanelButton>
      </Overlay>
    </Account>
  </FloatBox>
);

/* ---------- application bars ---------- */

const Page = styled.div`
  height: 100vh;
  display: flex;
  flex-direction: column;
  background: #2b2b2b;
  color: #e6e6e6;
  font: 12px/16px ${ui};
  font-feature-settings: 'palt';
`;

const TitleBar = styled.header`
  flex: 0 0 23px;
  display: flex;
  align-items: center;
  gap: 5px;
  padding: 0 2px;
  background: #000;
  color: #fff;
`;

const Logo = styled.span`
  width: 16px;
  height: 16px;
  display: grid;
  place-items: center;
  background: #ffde00;
  color: #333;
  font: bold 4px/4px ${arial};
`;

const AppTitle = styled.h1`
  flex: 1;
  margin: 0;
  font: 11px/16px ${ui};
`;

const MenuBar = styled.nav`
  flex: 0 0 21px;
  display: flex;
  padding-left: 11px;
  background: #1f1f1f;
  color: #d0d0d0;
  font-size: 11px;
`;

const MenuItem = styled.button`
  width: ${p => p.$w}px;
  padding-bottom: 2px;
  text-align: left;
  white-space: nowrap;
`;

const ToolBar = styled.div`
  flex: 0 0 30px;
  display: flex;
  align-items: center;
  gap: 2px;
  padding-right: 7px;
  border-top: 1px solid #a8a8a8;
  background: #1f1f1f;
`;

const Grip = styled.span`
  width: 2px;
  height: 28px;
  margin: 0 2px;
  border-left: 2px dotted #c0c0c0;
`;

const Tool = styled.button`
  flex: none;
  width: ${p => p.$w || 30}px;
  height: 27px;
  display: flex;
  align-items: center;
  justify-content: center;
  gap: 7px;
  color: ${p => p.$color || '#2f86ff'};
  font: ${p => p.$size || 12}px/16px ${ui};
  font-feature-settings: 'palt';
  white-space: nowrap;
  ${p => p.$on && css`
    background: #3a3a3a;
    border: 1px solid #fff;
    border-color: #a8a8a8 #fff #fff #a8a8a8;
  `}
`;

const Divider = styled.span`
  width: 1px;
  height: 25px;
  background: #666;
`;

const Caret = () => (
  <svg width="7" height="4" fill="#fff" aria-hidden="true"><path d="M0 0h7L3.5 4z" /></svg>
);

const Spacer = styled.span`
  flex: 1;
`;

const AccountButton = styled(Tool)`
  position: relative;
`;

const Badge = styled.span`
  position: absolute;
  top: 1px;
  right: 0;
  width: 15px;
  height: 15px;
  border-radius: 8px;
  background: #e03c20;
  color: #6b1c10;
  font: 10px/15px ${ui};
`;

const Level = styled.button`
  width: 16px;
  margin-left: 12px;
  color: #00d084;
  font: 8px/8px ${ui};
  svg { display: block; margin: 0 auto 1px; }
`;

const LevelBar = styled.div`
  width: 43px;
  height: 15px;
  margin-left: 5px;
  border: 1px solid #808080;
`;

const LevelFill = styled.div`
  width: 33%;
  height: 100%;
  background: #138a36;
`;

const Workspace = styled.main`
  position: relative;
  flex: 1;
  min-height: 0;
  overflow: hidden;
  background: #1f1f1f;
`;

const TabBar = styled.nav`
  flex: 0 0 22px;
  display: flex;
  align-items: center;
  padding-bottom: 2px;
  border-top: 1px solid #a8a8a8;
`;

const Tab = styled.button`
  flex: 0 0 ${p => p.$w}px;
  height: ${p => (p.$on ? 19 : 14)}px;
  line-height: 14px;
  border-right: 1px solid ${p => (p.$last ? 'transparent' : '#666')};
  white-space: nowrap;
  ${p => p.$on && css`
    align-self: flex-start;
    background: #1f1f1f;
    border: 1px solid #c8c8c8;
    border-top: 0;
  `}
`;

const TabArrows = styled.div`
  display: flex;
  gap: 14px;
  margin-left: auto;
  padding-right: 11px;
  color: #666;
  font-size: 8px;
`;

const StatusBar = styled.footer`
  flex: 0 0 21px;
  display: flex;
  align-items: center;
  padding-left: 2px;
  border-top: 1px solid #a8a8a8;
  font-size: 11px;
`;

const StatusCell = styled.span`
  flex: 0 0 ${p => p.$w}px;
  height: 18px;
  display: flex;
  align-items: center;
  gap: 6px;
  padding-left: 5px;
  border-left: 1px solid #777;
  white-space: nowrap;
`;

const menus = [['ファイル (F)', 73], ['表示 (V)', 64], ['挿入(I)', 57], ['チャート (C)', 73], ['ツール(T)', 63], ['ウインドウ(W)', 86], ['ヘルプ(H)', 60]];
const periods = ['M1', 'M5', 'M15', 'M30', 'H1', 'H4', 'D1', 'W1', 'MN'];
const tabs = [
  ['XAUUSD,Weekly', 113], ['XAUUSD,Daily', 97], ['XAUUSD,H4', 85], ['XAUUSD,H1', 85], ['XAUUSD,M30', 93],
  ['XAUUSD,M15', 93], ['XAUUSD,M1', 89], ['XAUUSD,M5', 88], ['XAUUSD,Monthly', 117], ['XAUUSD,Weekly', 110],
  ['EURUSD,M5', 85], ['US30,M5', 68], ['USOIL,M5', 77], ['USDJPY,M5', 84]
];

const MainToolBar = () => (
  <ToolBar>
    <Grip />
    <Tool $w={42} aria-label="Chart type">
      <Svg w={18} h={18}><path d="M1 1v16h16" stroke="#bbb" /><path d="M4 11l4-5 5 5 4-5" /></Svg><Caret />
    </Tool>
    <Tool $w={36} aria-label="Indicators">
      <Svg w={19} h={19}>
        <rect x="1" y="1" width="17" height="13" rx="1" fill="#08244a" /><path d="M3 7l4-3 3 2 5-3M4 16h11M6 18h7" />
        <path d="M5 12v-2M8 12V9M11 12v-2M14 12V8" stroke="#00d084" />
      </Svg><Caret />
    </Tool>
    <Tool $w={32} aria-label="Quotes">
      <Svg w={17} h={17} stroke="#d98200">
        <rect x="1" y="1" width="15" height="15" rx="1" fill="#4a2c00" />
        <path d="M11.5 5.5c-1-1.5-6-1.5-6 .8 0 2.7 6 1.5 6 4.200 0 2.300-5 2.300-6.200.7M8.500 2.500v12" />
      </Svg>
    </Tool>
    <Divider />
    <Tool $w={34}>IDE</Tool>
    <Tool $w={28} aria-label="Network">
      <Svg w={20} h={18}>
        <path d="M5.500 15A7.500 7.500 0 1 1 16.500 7M6 11.500a4.500 4.500 0 1 1 7-4.500" /><circle cx="9.500" cy="8.500" r="1.500" />
        <circle cx="14.500" cy="13" r="4.400" stroke="#00d084" fill="#0a3a28" /><path d="M14.500 10.500v5M12 13h5" stroke="#00d084" />
      </Svg>
    </Tool>
    <Divider />
    <Tool $w={114} $size={11} $color="#d8d8d8">
      <Svg w={12} h={12} stroke="#ff5050"><rect x="1" y="1" width="10" height="10" fill="#3a1010" /></Svg>アルゴリズム取引
    </Tool>
    <Tool $w={84} $color="#d8d8d8">
      <Svg w={13} h={16}><path d="M1 1h11v10l-4 4H1zM12 11H8v4" fill="#08244a" /><path d="M6.500 4v7M3 7.500h7" /></Svg>新規注文
    </Tool>
    <Divider />
    <Tool $w={31} aria-label="Bars"><BarsIcon /></Tool>
    <Tool $on aria-label="Candles"><CandleIcon w={14} h={17} /></Tool>
    <Tool $w={32} aria-label="Line"><WaveIcon /></Tool>
    <Divider />
    <Tool $w={32} aria-label="Zoom in"><ZoomIcon plus /></Tool>
    <Tool aria-label="Zoom out"><ZoomIcon /></Tool>
    <Tool $w={32} aria-label="Tile windows">
      <Svg w={17} h={17}><rect x="1" y="1" width="15" height="15" fill="#08244a" /><path d="M8.500 1v15M1 8.500h15" /></Svg>
    </Tool>
    <Divider />
    <Tool $on aria-label="Auto scroll"><ScrollIcon /></Tool>
    <Tool $on aria-label="Chart shift"><ShiftIcon /></Tool>
    <Divider />
    <Tool $w={32} aria-label="Screenshot">
      <Svg w={20} h={19}>
        <path d="M4 18H1V1h18v6" strokeDasharray="3 2" />
        <path d="M6 10h3l1-2h4l1 2h4v8H6z" fill="#08244a" /><circle cx="12.500" cy="13.500" r="2" />
      </Svg>
    </Tool>
    <Grip />
    <Tool $on aria-label="Cursor"><Svg w={16} h={16}><path d="M2 1l12 6-5 1.500 5 5-2 2-5-5-2 4.500z" fill="#08244a" /></Svg></Tool>
    <Tool aria-label="Crosshair"><Svg w={18} h={18}><path d="M9 0v6M9 12v6M0 9h6M12 9h6" /><circle cx="9" cy="9" r="2.500" /></Svg></Tool>
    <Divider />
    <Tool $w={34} aria-label="Vertical line"><Svg w={18} h={18}><path d="M9 0v6M9 11v7" /><circle cx="9" cy="8.500" r="2" /></Svg></Tool>
    <Tool aria-label="Horizontal line"><Svg w={18} h={18}><path d="M0 9h7M11 9h7" /><circle cx="9" cy="9" r="2" /></Svg></Tool>
    <Tool aria-label="Trend line"><Svg w={20} h={20}><path d="M4 16L16 4" /><circle cx="3" cy="17" r="2" /><circle cx="17" cy="3" r="2" /></Svg></Tool>
    <Tool aria-label="Channel"><Svg w={20} h={20}><path d="M3.500 10.500l6-6M9.500 15.500l9-9" /><circle cx="2.500" cy="12" r="2" /><circle cx="11" cy="3" r="2" /><circle cx="8" cy="17" r="2" /></Svg></Tool>
    <Tool aria-label="Fibonacci"><Svg w={20} h={19}><path d="M1 2h18M1 7h13M1 12h18M6 17h13" /><circle cx="16" cy="7" r="2" /><circle cx="3" cy="17" r="2" /></Svg></Tool>
    <Tool aria-label="Rectangle"><Svg w={20} h={19}><path d="M5 3h10M5 16h10M3 5v9M17 5v9" /><circle cx="3" cy="3" r="2" /><circle cx="17" cy="3" r="2" /><circle cx="3" cy="16" r="2" /><circle cx="17" cy="16" r="2" /></Svg></Tool>
    <Tool $w={37} aria-label="Objects">
      <Svg w={18} h={18}><path d="M4 1L1 7h6zM11 11h6v6h-6zM4 11l3 2.500-1 3.500H2l-1-3.500z" /><circle cx="14" cy="4" r="3" /></Svg><Caret />
    </Tool>
    <Grip />
    {periods.map(p => <Tool key={p} $on={p === 'M5'}>{p}</Tool>)}
    <Spacer />
    <Tool aria-label="Search"><Svg w={14} h={15} stroke="#ccc"><circle cx="6" cy="6" r="5" /><path d="M9.500 10l4 4.500" /></Svg></Tool>
    <AccountButton aria-label="Account">
      <Svg w={14} h={14} stroke="#ccc"><circle cx="7" cy="7" r="6" /><circle cx="7" cy="5.500" r="2" /><path d="M3 11c1-3 7-3 8 0" /></Svg>
      <Badge>1</Badge>
    </AccountButton>
    <Level>
      <svg width="9" height="9" fill="none" stroke="#00d084" aria-hidden="true"><path d="M4.500 1L1 4.500h2v1h3v-1h2zM4.500 5v4" /></svg>
      LVL
    </Level>
    <LevelBar role="meter" aria-label="Level" aria-valuenow={33} aria-valuemin={0} aria-valuemax={100}>
      <LevelFill />
    </LevelBar>
  </ToolBar>
);

const h1Axis = {
  start: -10, tag: '4641.873', tagTop: 293, tagColor: '#808080',
  marks: ['5053.280', '5006.655', '4960.030', '4913.405', '4866.780', '4820.155', '4773.530', '4726.905', '4680.280', '4633.655', '4587.030', '4540.405']
};
const m5Axis = {
  start: -4, tag: '4641.677', tagTop: 395, tagColor: colors.slate,
  marks: ['4743.640', '4735.165', '4726.690', '4718.215', '4709.740', '4701.265', '4692.790', '4684.315', '4675.840', '4667.365', '4658.890', '4650.415', '', '4633.465']
};
const m1Axis = {
  start: 10, tag: '4641.677', tagTop: 403, tagColor: colors.slate,
  marks: ['4691.465', '4687.300', '4683.135', '4678.970', '4674.805', '4670.640', '4666.475', '4662.310', '4658.145', '4653.980', '4649.815', '4645.650']
};
const h1Times = { start: 511, marks: ['19 Mar 16:00', '20 Mar 01:00', '20 Mar 09:00'] };
const m1Times = { start: 0, marks: ['20 Mar 2026', '20 Mar 09:41', '20 Mar 09:57', '20 Mar 10:13', '20 Mar 10:29', '20 Mar 10:45'] };
const hours = [7, 8, 9, 10, 11, 12, 13, 14, 15, 16, 17, 18, 19];

export default function App() {
  return (
    <Page>
      <GlobalStyle />
      <TitleBar>
        <Logo>exness</Logo>
        <AppTitle>232685865 - Exness-MT5Real5 - Hedge - Exness Technologies Ltd - XAUUSD,M5</AppTitle>
        <WindowControls names={['Dash', 'Restore', 'Close']} color="#fff" w={46} />
      </TitleBar>
      <MenuBar>
        {menus.map(([name, w]) => <MenuItem key={name} $w={w}>{name}</MenuItem>)}
      </MenuBar>
      <MainToolBar />

      <Workspace>
        <ChartWindow box={[-2, 421, 270, 504]}>
          <Chart name="M30" chart={m30} />
        </ChartWindow>
        <ChartWindow box={[0, 0, 219, 428]} title="XAUUSD,We...">
          <Chart name="Weekly" chart={weekly} />
        </ChartWindow>
        <ChartWindow box={[1686, 0, 234, 428]} title="XAUUSD,Mont...">
          <Chart name="Monthly"><MonthlyPanel /></Chart>
        </ChartWindow>
        <ChartWindow box={[1388, 423, 531, 500]}>
          <Chart name="M1" chart={m1} axis={m1Axis} times={m1Times} icons>
            <Overlay $place="top: 31px; left: 11px;"><PanelButton $w={23} $h={23} $bg="#696969">5</PanelButton></Overlay>
            <Overlay $place="bottom: 10px; left: 11px;"><PanelButton $w={26} $h={28} $bg="#696969">O</PanelButton></Overlay>
          </Chart>
        </ChartWindow>
        <ChartWindow box={[500, 0, 377, 428]} title="XAUUSD,H4">
          <Chart name="H4" chart={h4} />
        </ChartWindow>
        <ChartWindow box={[217, 1, 286, 427]} title="XAUUSD,Daily">
          <Chart name="Daily" chart={daily} />
        </ChartWindow>
        <ChartWindow box={[873, 1, 818, 448]} title="XAUUSD,H1">
          <Chart name="H1" chart={h1} axis={h1Axis} times={h1Times}>
            <Overlay $place="right: 10px; bottom: 10px;"><PanelButton $w={40} $h={30} $bg="#0000ff">C</PanelButton></Overlay>
          </Chart>
        </ChartWindow>
        <ChartWindow box={[265, 422, 258, 502]} title="XAUUSD,M15">
          <Chart name="M15" chart={m15} />
        </ChartWindow>
        <ChartWindow box={[515, 423, 874, 500]} title="XAUUSD,M5" active>
          <Chart name="M5" chart={m5} axis={m5Axis} icons>
            <Overlay $place="top: 31px; left: 11px;">
              <ButtonRow>
                <PanelButton $w={23} $h={23}>30</PanelButton>
                <PanelButton $w={23} $h={23}>60</PanelButton>
              </ButtonRow>
            </Overlay>
            <Overlay $place="bottom: 61px; right: 9px;"><PanelButton $w={18} $h={18}>S</PanelButton></Overlay>
            <Overlay $place="bottom: 11px; right: 35px;">
              <Sessions>{'US  0.00  84.96\nEU  89.87  143.21\nJP  96.72  53.95'}</Sessions>
            </Overlay>
            <Overlay $place="bottom: 0; left: -8px;">
              <Hours>{hours.map(h => <span key={h}>{h}</span>)}</Hours>
            </Overlay>
          </Chart>
        </ChartWindow>
        <AccountWindow />
      </Workspace>

      <TabBar>
        {tabs.map(([name, w], i) => (
          <Tab key={i} $w={w} $on={i === 7} $last={i === 6 || i === tabs.length - 1}>{name}</Tab>
        ))}
        <TabArrows><span>◀</span><span>▶</span></TabArrows>
      </TabBar>
      <StatusBar>
        <Spacer>F1を押してヘルプを開く</Spacer>
        <StatusCell $w={103}>マルチタイム分析</StatusCell>
        <StatusCell $w={98} />
        {[1, 2, 3, 4].map(n => <StatusCell key={n} $w={86} />)}
        <StatusCell $w={95} />
        <StatusCell $w={120}><SignalIcon />38.47 ms</StatusCell>
      </StatusBar>
    </Page>
  );
}
